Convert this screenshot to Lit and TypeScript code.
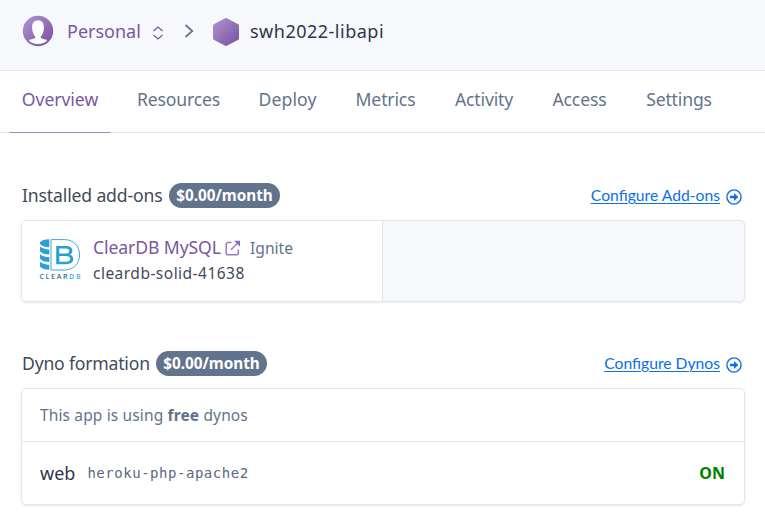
import { LitElement, html, css, svg } from "lit";
import { customElement } from "lit/decorators.js";

const avatar = html`<svg class="avatar" width="32" height="32" viewBox="0 0 32 32">
  <defs><linearGradient id="g" x1="0" y1="0" x2="1" y2="1"><stop offset="0.1" stop-color="#ad8dd0"/><stop offset="0.9" stop-color="#79589f"/></linearGradient></defs>
  <circle cx="16" cy="16" r="15.2" fill="url(#g)"/>
  <path d="M16 5.3C12 5.3 10 8.4 10.1 12.5c.1 4.3 1.5 7.5 3.3 9.2.1 1-.5 1.5-1.9 2-2.300.5-4.500 1-4.500 1.900C8.700 27.900 12.200 29 16 29s7.300-1.100 9-3.400c0-.9-2.200-1.400-4.500-1.900-1.400-.5-2-1-1.900-2 1.800-1.700 3.200-4.900 3.300-9.200C22 8.400 20 5.300 16 5.300z" fill="#fff"/>
</svg>`;

const hexagon = html`<svg class="hexagon" width="26" height="28" viewBox="0 0 26 28">
  <defs><linearGradient id="h" x1="0" y1="0" x2="1" y2="1"><stop offset="0.1" stop-color="#ad8dd0"/><stop offset="0.9" stop-color="#79589f"/></linearGradient></defs>
  <path d="M11.7.4a2.600 2.600 0 0 1 2.600 0l10.500 5.700A2.300 2.300 0 0 1 26 8.100v11.800a2.300 2.300 0 0 1-1.200 2l-10.500 5.700a2.600 2.600 0 0 1-2.600 0L1.200 21.900a2.300 2.300 0 0 1-1.200-2V8.100a2.300 2.300 0 0 1 1.200-2z" fill="url(#h)"/>
</svg>`;

const circleArrow = html`<svg width="16" height="16" viewBox="0 0 16 16">
  <circle cx="8" cy="8" r="7.100" fill="none" stroke="#0b6fe8" stroke-width="1.400"/>
  <path d="M4 6.700h4V4L12.300 8 8 12V9.300H4z" fill="#0b6fe8"/>
</svg>`;

const stripes = [7.6, 15.200, 22.800].map(
  (y) => svg`<path d="M0 ${y}c2 1.900 5 2.700 9.300 2.900v5C5 ${y + 7.7} 2 ${y + 6.8} 0 ${y + 4.600}z" fill="#2d9fd6"/>`
);

const clearDb = html`<svg class="logo" width="40" height="40" viewBox="0 0 40 40">
  <path d="M0 3.200C1.500 1.200 5 .2 9.300.2v8C5 8.200 1.500 7 0 5z" fill="#2d9fd6"/>
  ${stripes}
  <path d="M11 .6h13.500C33.500.6 39.500 7 39.500 15.800S33.500 31 24.500 31H11z" fill="none" stroke="#3ea7d9" stroke-width="1"/>
  <path d="M16.200 7h9.300c4.500 0 6.900 1.600 6.900 4.800 0 2-1.100 3.200-2.700 3.900 2.300.6 3.600 2.100 3.600 4.400 0 3.300-2.700 5.100-7.200 5.100h-9.900zm3.100 2.500v5.100h6c2.500 0 3.900-.8 3.900-2.600s-1.400-2.500-3.900-2.500zm0 7.500v5.700h6.600c2.700 0 4.200-.9 4.200-2.900s-1.500-2.800-4.200-2.800z" fill="#2d9fd6"/>
  <text class="brand" x="-.5" y="39.700" textLength="41">CLEAR<tspan fill="#4aafdc">DB</tspan></text>
</svg>`;

@customElement("app-root")
export class AppRoot extends LitElement {
  static styles = css`
    * { box-sizing: border-box; }
    :host {
      display: block; height: 529px; overflow: hidden; background: #fff;
      font-family: "Noto Sans", sans-serif; font-size: 18px; color: #3f4a5c; white-space: nowrap;
    }
    svg { display: block; flex: none; }
    header {
      height: 71px; background: #f7f8fc; border-bottom: 1px solid #e3e8f0;
      display: flex; align-items: center; padding: 0 0 8px 22px;
    }
    .owner { color: #79589f; margin-left: 13px; width: 74px; }
    .updown { margin: 3px 0 0 11px; }
    .crumb { margin-left: 20px; }
    .hexagon { margin: 1px 0 0 19px; }
    .app { color: #2f3747; margin-left: 11px; letter-spacing: .5px; }
    nav { height: 62px; display: flex; border-bottom: 1px solid #e3e8f0; padding-left: 10px; }
    nav a { height: 62px; line-height: 57px; color: #62738d; margin-right: 15px; text-align: center; letter-spacing: -.15px; font-size: 17.600px; }
    nav .active { color: #79589f; border-bottom: 1px solid #9f85bf; letter-spacing: -.05px; }
    .overview { width: 100px; } .resources { width: 107px; } .metrics { width: 85px; }
    nav .deploy { width: 81px; letter-spacing: .1px; }
    .activity { width: 82px; } .access { width: 79px; } .settings { width: 90px; }
    main { padding: 50px 20px 0 21px; }
    .heading { display: flex; align-items: center; height: 25px; margin-bottom: 12px; }
    h2 { margin: -1px 6px 0 1px; font-size: 17.600px; font-weight: 400; letter-spacing: -.15px; }
    .addons-title { width: 141px; }
    .dynos-title { width: 128px; letter-spacing: -.2px; }
    .badge { height: 25px; border-radius: 13px; background: #62738d; color: #fff; font-size: 15.300px; font-weight: 700; line-height: 25px; width: 111px; text-align: center; }
    .link { margin-left: auto; display: flex; align-items: center; gap: 6px; padding-right: 3px; color: #0b6fe8; font-family: Lato, sans-serif; font-size: 15.700px; }
    .link span { margin-top: -2px; text-decoration: underline; text-underline-offset: 2px; text-decoration-thickness: 1px; }
    .link svg { margin-top: 2px; }
    .card { border: 1px solid #e2e5ee; border-radius: 5px; box-shadow: 0 1px 2px rgba(60, 70, 100, .12); overflow: hidden; }
    .addons { height: 82px; display: flex; margin-bottom: 49px; background: #f7f8fc; }
    .addon { width: 361px; background: #fff; border-right: 1px solid #e2e5ee; display: flex; padding: 14px 0 0 18px; }
    .logo { margin-top: 4px; overflow: visible; }
    .details { margin-left: 13px; }
    .title { display: flex; height: 26px; line-height: 24px; }
    .name { color: #79589f; width: 128px; font-size: 17.600px; letter-spacing: -.1px; }
    .external { margin: 5px 0 0 4px; }
    .plan { font-size: 15.600px; line-height: 26px; margin-left: 9px; color: #62738d; }
    .id { font-size: 15.500px; line-height: 25px; letter-spacing: .48px; }
    .brand { font: 600 7px "Open Sans", sans-serif; fill: #356c8c; }
    .notice { height: 53px; line-height: 52px; border-bottom: 1px solid #e2e5ee; padding-left: 18px; font-size: 15.500px; letter-spacing: .14px; color: #62738d; }
    .dyno { height: 62px; display: flex; align-items: center; padding: 0 19px 0 18px; }
    .process { color: #2f3747; }
    code { font: 14px "DejaVu Sans Mono", monospace; letter-spacing: .53px; margin-left: 12px; color: #596981; }
    .on { margin-left: auto; font-size: 16px; font-weight: 700; color: #008000; }
  `;

  render() {
    const tabs = ["Overview", "Resources", "Deploy", "Metrics", "Activity", "Access", "Settings"];
    return html`
      <header>
        ${avatar}<span class="owner">Personal</span>
        <svg class="updown" width="12" height="14" viewBox="0 0 12 14"><path d="M1.500 5L6 1l4.500 4M1.500 9L6 13l4.500-4" fill="none" stroke="#79589f" stroke-width="1.300"/></svg>
        <svg class="crumb" width="10" height="14" viewBox="0 0 10 14"><path d="M1.500 1l6.800 6-6.800 6" fill="none" stroke="#62738d" stroke-width="1.700"/></svg>
        ${hexagon}<span class="app">swh2022-libapi</span>
      </header>
      <nav>${tabs.map((t, i) => html`<a class="${t.toLowerCase()} ${i === 0 ? "active" : ""}">${t}</a>`)}</nav>
      <main>
        <div class="heading"><h2 class="addons-title">Installed add-ons</h2><span class="badge">$0.00/month</span>
          <a class="link"><span>Configure Add-ons</span>${circleArrow}</a></div>
        <section class="card addons"><div class="addon">${clearDb}
          <div class="details">
            <div class="title"><span class="name">ClearDB MySQL</span>
              <svg class="external" width="16" height="16" viewBox="0 0 16 16"><path d="M6.500 2.500H3A1.800 1.800 0 0 0 1.200 4.300V13A1.800 1.800 0 0 0 3 14.800h8.500a1.800 1.800 0 0 0 1.800-1.800V9.500M6 9.800l7-7" fill="none" stroke="#9a7bbd" stroke-width="1.500"/><path d="M9 .8h6v6z" fill="#9168b8"/></svg>
              <span class="plan">Ignite</span></div>
            <div class="id">cleardb-solid-41638</div>
          </div></div></section>
        <div class="heading"><h2 class="dynos-title">Dyno formation</h2><span class="badge">$0.00/month</span>
          <a class="link"><span>Configure Dynos</span>${circleArrow}</a></div>
        <section class="card">
          <div class="notice">This app is using <b>free</b> dynos</div>
          <div class="dyno"><span class="process">web</span><code>heroku-php-apache2</code><span class="on">ON</span></div>
        </section>
      </main>`;
  }
}
